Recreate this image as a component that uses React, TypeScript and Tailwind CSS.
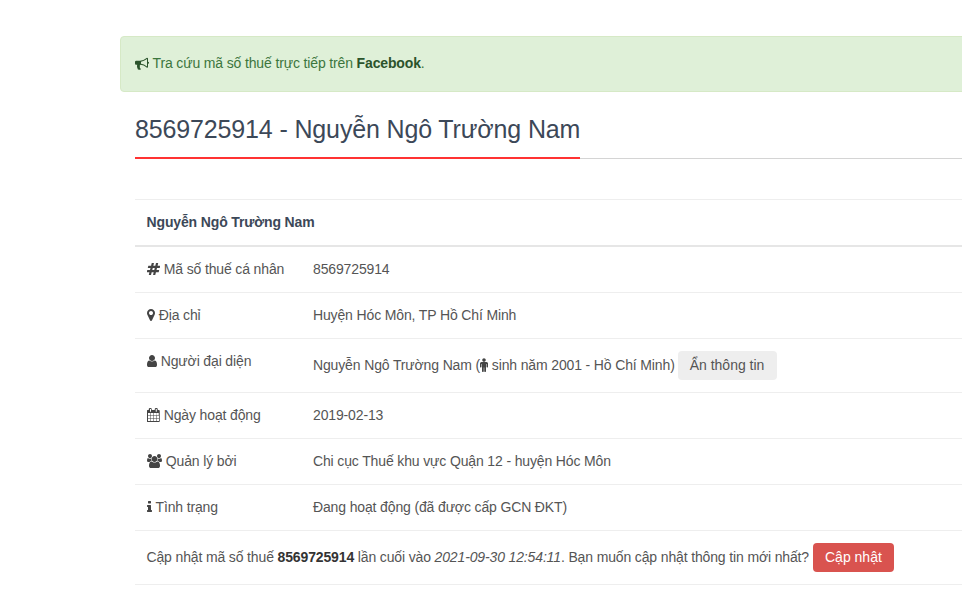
import React from 'react';

const ICONS = {
  bullhorn: { box: '0 0 1792 1792', w: 'w-[14px]', d: 'M1664 736q53 0 90.5 37.5t37.5 90.5-37.5 90.5-90.5 37.5v384q0 52-38 90t-90 38q-417-347-812-380-58 19-91 66t-31 100.5 40 92.5q-20 33-23 65.5t6 58 33.5 55 48 50 61.5 50.5q-29 58-111.5 83t-168.5 11.5-132-55.5q-7-23-29.5-87.5t-32-94.5-23-89-15-101 3.5-98.5 22-110.5h-122q-66 0-113-47t-47-113v-192q0-66 47-113t113-47h480q435 0 896-384 52 0 90 38t38 90v384zm-128 604v-954q-394 302-768 343v270q377 42 768 341z' },
  hash: { box: '64 0 1664 1792', w: 'w-[13px]', d: 'M991 1024l64-256h-254l-64 256h254zm768-504l-56 224q-7 24-31 24h-327l-64 256h311q15 0 25 12 10 14 6 28l-56 224q-5 24-31 24h-327l-81 328q-7 24-31 24h-224q-16 0-26-12-9-12-6-28l78-312h-254l-81 328q-7 24-31 24h-225q-15 0-25-12-9-12-6-28l78-312h-311q-15 0-25-12-9-12-6-28l56-224q7-24 31-24h327l64-256h-311q-15 0-25-12-10-14-6-28l56-224q5-24 31-24h327l81-328q7-24 32-24h224q15 0 25 12 9 12 6 28l-78 312h254l81-328q7-24 32-24h224q15 0 25 12 9 12 6 28l-78 312h311q15 0 25 12 9 12 6 28z' },
  marker: { box: '384 0 1024 1792', w: 'w-[8px]', d: 'M1152 640q0-106-75-181t-181-75-181 75-75 181 75 181 181 75 181-75 75-181zm256 0q0 109-33 179l-364 774q-16 33-47.5 52t-67.5 19-67.5-19-46.5-52l-365-774q-33-70-33-179 0-212 150-362t362-150 362 150 150 362z' },
  user: { box: '256 0 1280 1792', w: 'w-[10px]', d: 'M1536 1399q0 109-62.5 187t-150.5 78h-854q-88 0-150.5-78t-62.5-187q0-85 8.5-160.5t31.5-152 58.5-131 94-89 134.5-34.5q131 128 313 128t313-128q76 0 134.5 34.5t94 89 58.5 131 31.5 152 8.5 160.5zm-256-887q0 159-112.5 271.5t-271.5 112.5-271.5-112.5-112.5-271.5 112.5-271.5 271.5-112.5 271.5 112.5 112.5 271.5z' },
  calendar: { box: '64 0 1664 1792', w: 'w-[13px]', d: 'M192 1664h288v-288h-288v288zm352 0h320v-288h-320v288zm-352-352h288v-320h-288v320zm352 0h320v-320h-320v320zm-352-384h288v-288h-288v288zm736 736h320v-288h-320v288zm-384-736h320v-288h-320v288zm768 736h288v-288h-288v288zm-384-352h320v-320h-320v320zm-352-864v-288q0-13-9.5-22.5t-22.5-9.5h-64q-13 0-22.5 9.5t-9.5 22.5v288q0 13 9.5 22.5t22.5 9.5h64q13 0 22.5-9.5t9.5-22.5zm736 864h288v-320h-288v320zm-384-384h320v-288h-320v288zm352 0h288v-288h-288v288zm32-480v-288q0-13-9.5-22.5t-22.5-9.5h-64q-13 0-22.5 9.5t-9.5 22.5v288q0 13 9.5 22.5t22.5 9.5h64q13 0 22.5-9.5t9.5-22.5zm384-64v1280q0 52-38 90t-90 38h-1408q-52 0-90-38t-38-90v-1280q0-52 38-90t90-38h128v-96q0-66 47-113t113-47h64q66 0 113 47t47 113v96h384v-96q0-66 47-113t113-47h64q66 0 113 47t47 113v96h128q52 0 90 38t38 90z' },
  users: { box: '0 0 1920 1792', w: 'w-[15px]', d: 'M593 896q-162 5-265 128h-134q-82 0-138-40.5t-56-118.5q0-353 124-353 6 0 43.5 21t97.5 42.5 119 21.5q67 0 133-23-5 37-5 66 0 139 81 256zm1071 637q0 120-73 189.5t-194 69.5h-874q-121 0-194-69.5t-73-189.5q0-53 3.5-103.5t14-109 26.5-108.5 43-97.5 62-81 85.5-53.5 111.5-20q10 0 43 21.5t73 48 107 48 135 21.5 135-21.5 107-48 73-48 43-21.5q61 0 111.5 20t85.5 53.5 62 81 43 97.5 26.5 108.5 14 109 3.5 103.5zm-1024-1277q0 106-75 181t-181 75-181-75-75-181 75-181 181-75 181 75 75 181zm704 384q0 159-112.5 271.5t-271.5 112.5-271.5-112.5-112.5-271.5 112.5-271.5 271.5-112.5 271.5 112.5 112.5 271.5zm576 225q0 78-56 118.5t-138 40.5h-134q-103-123-265-128 81-117 81-256 0-29-5-66 66 23 133 23 59 0 119-21.5t97.5-42.5 43.5-21q124 0 124 353zm-128-609q0 106-75 181t-181 75-181-75-75-181 75-181 181-75 181 75 75 181z' },
  info: { box: '576 0 640 1792', w: 'w-[5px]', d: 'M1216 1344v128q0 26-19 45t-45 19h-512q-26 0-45-19t-19-45v-128q0-26 19-45t45-19h64v-384h-64q-26 0-45-19t-19-45v-128q0-26 19-45t45-19h384q26 0 45 19t19 45v576h64q26 0 45 19t19 45zm-128-1152v192q0 26-19 45t-45 19h-256q-26 0-45-19t-19-45v-192q0-26 19-45t45-19h256q26 0 45 19t19 45z' },
  male: { box: '224 0 1024 1792', w: 'w-[8px]', d: 'M1248 704v416q0 40-28 68t-68 28-68-28-28-68v-352h-64v912q0 46-33 79t-79 33-79-33-33-79v-464h-64v464q0 46-33 79t-79 33-79-33-33-79v-912h-64v352q0 40-28 68t-68 28-68-28-28-68v-416q0-80 56-136t136-56h640q80 0 136 56t56 136zm-288-448q0 93-65.5 158.5t-158.5 65.5-158.5-65.5-65.5-158.5 65.5-158.5 158.5-65.5 158.5 65.5 65.5 158.5z' },
};

function Icon({ name, className = 'text-[#444]' }: { name: keyof typeof ICONS; className?: string }) {
  const icon = ICONS[name];
  return (
    <svg viewBox={icon.box} preserveAspectRatio="none" className={`inline-block h-[14px] align-[-2px] ${icon.w} ${className}`} fill="currentColor">
      <path d={icon.d} />
    </svg>
  );
}

const ROWS: { icon: keyof typeof ICONS; label: string; value: string; cell: string }[] = [
  { icon: 'hash', label: 'Mã số thuế cá nhân', value: '8569725914', cell: 'h-[47px] pt-[1px]' },
  { icon: 'marker', label: 'Địa chỉ', value: 'Huyện Hóc Môn, TP Hồ Chí Minh', cell: 'h-[46px] pb-[1px]' },
];

const ROWS_AFTER: { icon: keyof typeof ICONS; label: string; value: string; cell: string }[] = [
  { icon: 'calendar', label: 'Ngày hoạt động', value: '2019-02-13', cell: 'h-[46px] pb-[1px]' },
  { icon: 'users', label: 'Quản lý bởi', value: 'Chi cục Thuế khu vực Quận 12 - huyện Hóc Môn', cell: 'h-[46px] pb-[1px]' },
  { icon: 'info', label: 'Tình trạng', value: 'Đang hoạt động (đã được cấp GCN ĐKT)', cell: 'h-[46px] pb-[1px]' },
];

function App() {
  return (
    <div className="h-[613px] overflow-hidden bg-white pl-[120px] pt-[36px] font-['Liberation_Sans',Arial,sans-serif] text-[14px] leading-[21px] tracking-[-0.14px] text-[#555]">
      <div className="w-[1170px]">
        {/* Alert */}
        <div className="h-[56px] flex items-center rounded border border-[#d6e9c6] bg-[#dff0d8] px-[14px] pb-[2px] text-[#3c763d]">
          <span>
            <Icon name="bullhorn" className="text-[#2b542c]" /> Tra cứu mã số thuế trực tiếp trên <b className="text-[#2b542c]">Facebook</b>.
          </span>
        </div>

        <div className="pl-[15px]">
          {/* Title */}
          <div className="mt-[19px] border-b border-[#d4d4d4]">
            <h1 className="inline-block border-b-2 border-[#f33] -mb-px pb-[10px] text-[25px] leading-[36px] text-[#3c4858]">
              8569725914 - Nguyễn Ngô Trường Nam
            </h1>
          </div>

          {/* Details */}
          <table className="mt-[40px] w-full border-collapse">
            <thead>
              <tr className="border-t border-[#eee] border-b-2 border-b-[#e6e6e6]">
                <th colSpan={2} className="h-[46px] pl-[11.5px] pr-[12px] text-left font-bold text-[#3c4858]">Nguyễn Ngô Trường Nam</th>
              </tr>
            </thead>
            <tbody>
              {ROWS.map(row => (
                <tr key={row.label} className="border-b border-[#eee]">
                  <td className={`w-[166px] ${row.cell} pl-[12px] pr-[12px] align-middle whitespace-nowrap`}><Icon name={row.icon} /> {row.label}</td>
                  <td className={`${row.cell} px-[12px] align-middle`}>{row.value}</td>
                </tr>
              ))}
              <tr className="border-b border-[#eee]">
                <td className="h-[54px] pl-[12px] pr-[12px] pt-[12px] align-top whitespace-nowrap"><Icon name="user" /> Người đại diện</td>
                <td className="px-[12px] align-middle">
                  Nguyễn Ngô Trường Nam (<Icon name="male" /> sinh năm 2001 - Hồ Chí Minh)
                  <button className="ml-[3px] h-[29px] rounded bg-[#eee] pl-[12px] pr-[13px] tracking-normal text-[#555]">Ẩn thông tin</button>
                </td>
              </tr>
              {ROWS_AFTER.map(row => (
                <tr key={row.label} className="border-b border-[#eee]">
                  <td className={`w-[166px] ${row.cell} pl-[12px] pr-[12px] align-middle whitespace-nowrap`}><Icon name={row.icon} /> {row.label}</td>
                  <td className={`${row.cell} px-[12px] align-middle`}>{row.value}</td>
                </tr>
              ))}
              <tr className="border-b border-[#eee]">
                <td colSpan={2} className="h-[54px] pl-[11.5px] pr-[12px] align-middle">
                  Cập nhật mã số thuế <b className="text-[#333]">8569725914</b> lần cuối vào <i>2021-09-30 12:54:11</i>. Bạn muốn cập nhật thông tin mới nhất?
                  <button className="ml-[4px] h-[29px] rounded bg-[#d9534f] px-[12px] tracking-normal text-white">Cập nhật</button>
                </td>
              </tr>
            </tbody>
          </table>
        </div>
      </div>
    </div>
  );
}

export default App;
